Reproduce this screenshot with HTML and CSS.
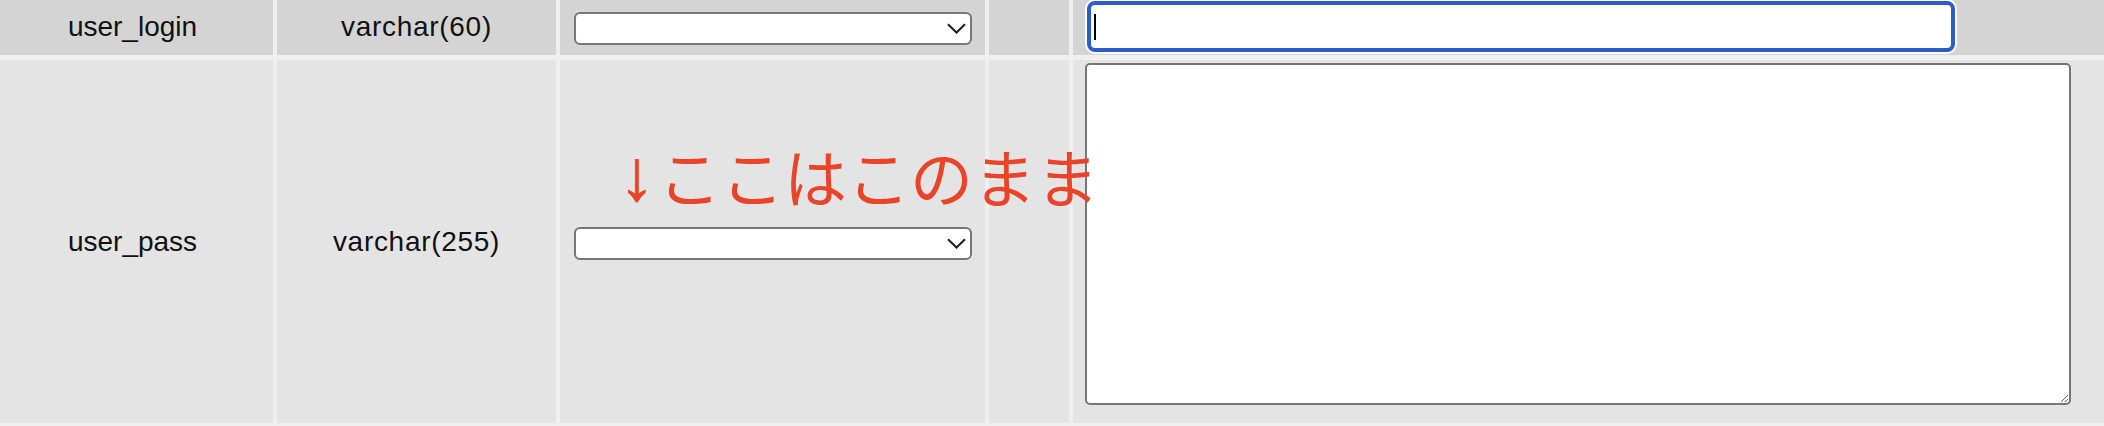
FILE: index.html
```html
<!DOCTYPE html>
<html lang="ja">
<head>
<meta charset="utf-8">
<title>Table edit</title>
<link rel="stylesheet" href="styles.css">
</head>
<body>
<div class="page">
  <table class="grid">
    <colgroup>
      <col class="c-name">
      <col class="c-type">
      <col class="c-func">
      <col class="c-null">
      <col class="c-value">
    </colgroup>
    <tbody>
      <tr class="row row-marked">
        <td class="cell cell-text">user_login</td>
        <td class="cell cell-text cell-type">varchar(60)</td>
        <td class="cell cell-func">
          <div class="select-wrap">
            <select class="select"><option></option></select>
            <svg class="chevron" width="19" height="11" viewBox="0 0 19 11"><path d="M1 1.2 L9.5 9.5 L18 1.2" fill="none" stroke="#1e1e1e" stroke-width="2"/></svg>
          </div>
        </td>
        <td class="cell"></td>
        <td class="cell cell-value">
          <div class="focus-field">
            <span class="caret"></span>
            <input class="field-input" type="text" value="">
          </div>
        </td>
      </tr>
      <tr class="row row-tall">
        <td class="cell cell-text">user_pass</td>
        <td class="cell cell-text cell-type">varchar(255)</td>
        <td class="cell cell-func">
          <div class="select-wrap">
            <select class="select"><option></option></select>
            <svg class="chevron" width="19" height="11" viewBox="0 0 19 11"><path d="M1 1.2 L9.5 9.5 L18 1.2" fill="none" stroke="#1e1e1e" stroke-width="2"/></svg>
          </div>
        </td>
        <td class="cell"></td>
        <td class="cell cell-value cell-top">
          <textarea class="area"></textarea>
        </td>
      </tr>
      <tr class="row row-next">
        <td class="cell"></td>
        <td class="cell"></td>
        <td class="cell"></td>
        <td class="cell"></td>
        <td class="cell"></td>
      </tr>
    </tbody>
  </table>
  <div class="note"><span class="note-arrow">↓</span><span class="note-text">ここはこのまま</span></div>
</div>
</body>
</html>
```

FILE: styles.css
```css
html, body {
  margin: 0;
  padding: 0;
  background: #efefef;
  overflow: hidden;
}

.page {
  position: relative;
  width: 2104px;
  height: 426px;
  overflow: hidden;
}

.grid {
  border-collapse: separate;
  border-spacing: 4px 5px;
  table-layout: fixed;
  width: 2189px;
  margin: -7px 0 0 -12px;
  font-family: "Liberation Sans", Arial, sans-serif;
  font-size: 28px;
  color: #111;
}

.c-name { width: 281px; }
.c-type { width: 279px; }
.c-func { width: 425px; }
.c-null { width: 80px; }
.c-value { width: 1100px; }

.cell {
  padding: 0;
  vertical-align: middle;
  background: #e4e4e4;
}

.row-marked .cell {
  background: #d4d4d4;
  height: 57px;
}

.row-tall .cell {
  height: 360px;
}

.row-next .cell {
  height: 40px;
  background: #e2e2e2;
}

.cell-text {
  text-align: center;
  line-height: 32px;
}

.cell-type {
  letter-spacing: 0.7px;
}

.cell-func {
  text-align: center;
}

.select-wrap {
  position: relative;
  display: inline-block;
  width: 398px;
  height: 33px;
  margin-top: 4px;
  vertical-align: middle;
}

.select {
  appearance: none;
  -webkit-appearance: none;
  display: block;
  box-sizing: border-box;
  width: 398px;
  height: 33px;
  margin: 0;
  border: 2px solid #777;
  border-radius: 6px;
  background: #fff;
  font-family: "Liberation Sans", Arial, sans-serif;
  font-size: 26px;
}

.chevron {
  position: absolute;
  right: 6px;
  top: 11px;
  pointer-events: none;
}

.cell-value {
  text-align: left;
  padding-left: 14px;
}

.cell-top {
  vertical-align: top;
  padding-left: 12px;
  padding-top: 3px;
}

.focus-field {
  box-sizing: border-box;
  display: flex;
  align-items: center;
  width: 868px;
  height: 51px;
  border: 4px solid #2a5dc8;
  border-radius: 8px;
  background: #fff;
  box-shadow: 0 0 0 2px #fff;
  padding-left: 3px;
}

.caret {
  flex: none;
  width: 2px;
  height: 26px;
  background: #000;
}

.field-input {
  flex: 1;
  min-width: 0;
  border: none;
  outline: none;
  background: transparent;
  font-family: "Liberation Sans", Arial, sans-serif;
  font-size: 26px;
  padding: 0;
}

.area {
  display: block;
  box-sizing: border-box;
  width: 986px;
  height: 342px;
  margin: 0;
  border: 2px solid #767676;
  border-radius: 5px;
  background: #fff;
  resize: both;
}

.note {
  position: absolute;
  left: 619px;
  top: 145px;
  display: flex;
  align-items: center;
  height: 60px;
  color: #e9442a;
  white-space: nowrap;
  z-index: 2;
}

.note-arrow {
  font-family: "Liberation Sans", sans-serif;
  font-size: 72px;
  line-height: 60px;
  margin-right: 3px;
  margin-top: -1px;
  -webkit-text-stroke: 0.8px #e9442a;
}

.note-text {
  font-family: "Noto Sans CJK JP", sans-serif;
  font-size: 63px;
  line-height: 60px;
}
```
